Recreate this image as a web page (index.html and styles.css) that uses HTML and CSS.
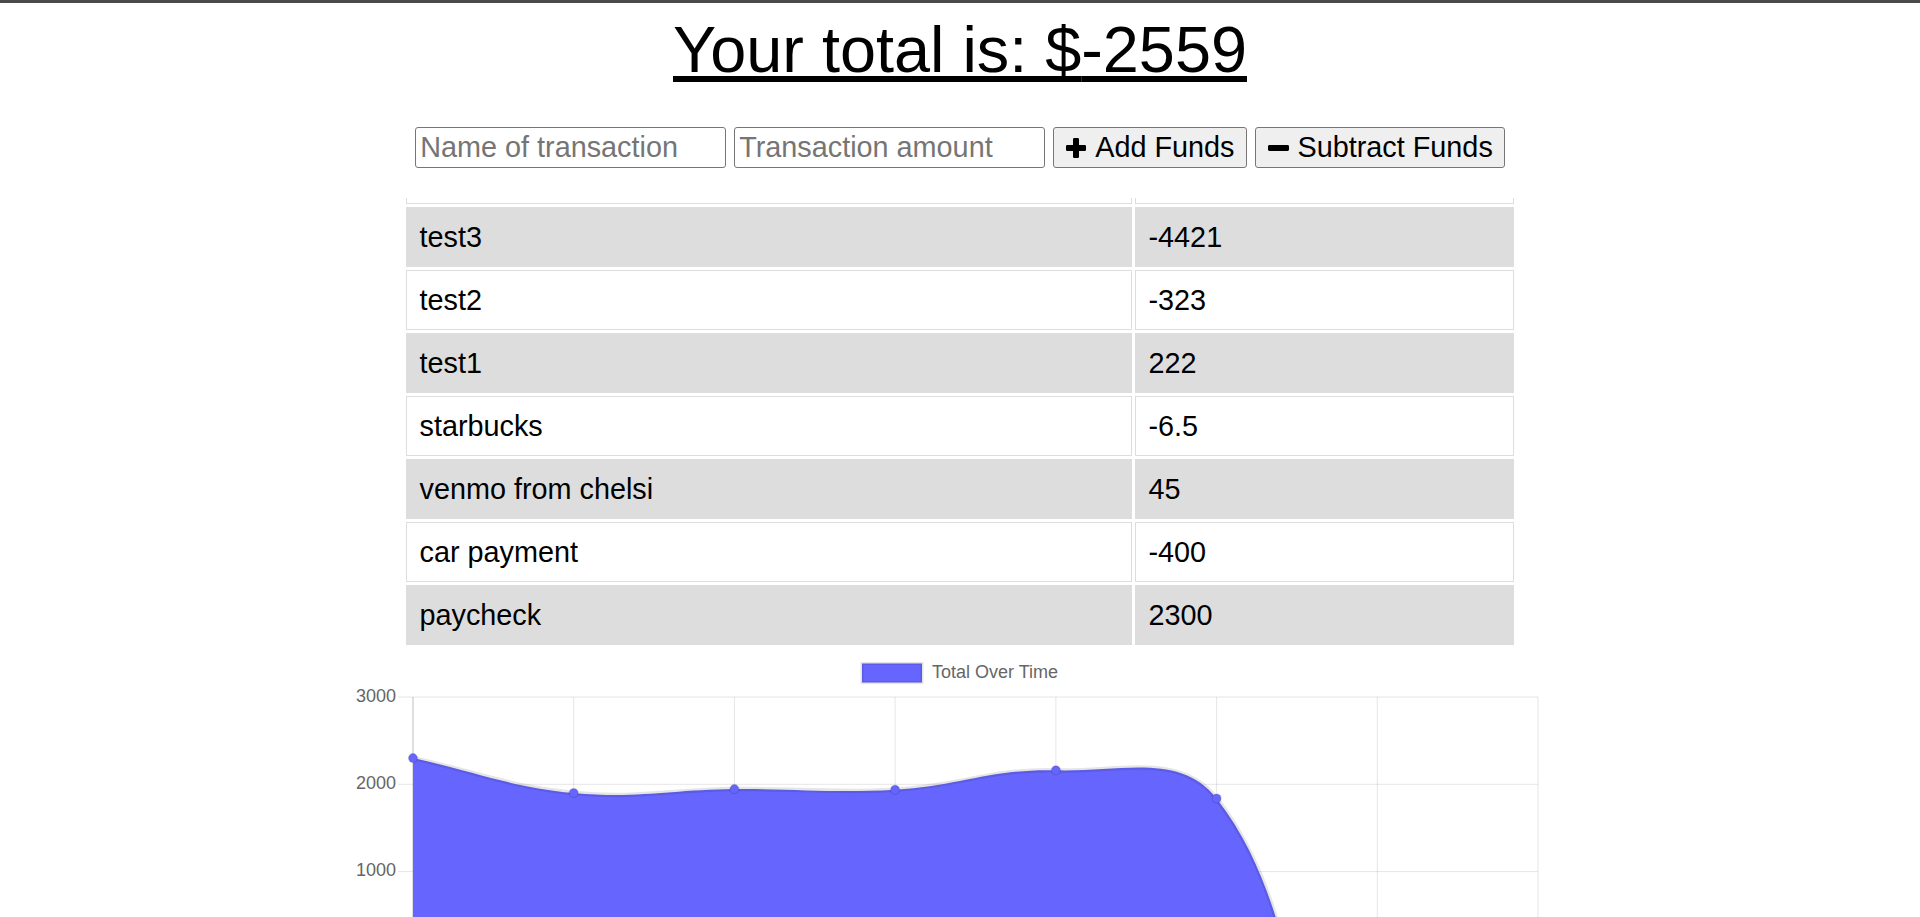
FILE: index.html
```html
<!DOCTYPE html>
<html lang="en">
<head>
  <meta charset="UTF-8">
  <meta name="viewport" content="width=device-width, initial-scale=1">
  <title>Budget Tracker</title>
  <link rel="stylesheet" href="styles.css">
</head>
<body>
  <div class="wrapper">
    <div class="total">Your total is: $<span id="total">-2559</span></div>

    <div class="form">
      <input type="text" id="t-name" placeholder="Name of transaction">
      <input type="number" id="t-amount" placeholder="Transaction amount">
      <button id="add-btn">
        <svg class="icon" width="20" height="20" viewBox="0 0 20 20"><rect x="7" y="0" width="6" height="20" rx="1.2"/><rect x="0" y="7" width="20" height="6" rx="1.2"/></svg>
        Add Funds
      </button>
      <button id="sub-btn">
        <svg class="icon" width="21" height="20" viewBox="0 0 21 20"><rect x="0" y="7" width="21" height="6" rx="1.4"/></svg>
        Subtract Funds
      </button>
    </div>

    <div class="transactions">
      <table>
        <thead>
          <tr>
            <th class="name">Transaction</th>
            <th>Amount</th>
          </tr>
        </thead>
        <tbody id="tbody">
          <tr><td>test4</td><td>24.5</td></tr>
          <tr><td>test3</td><td>-4421</td></tr>
          <tr><td>test2</td><td>-323</td></tr>
          <tr><td>test1</td><td>222</td></tr>
          <tr><td>starbucks</td><td>-6.5</td></tr>
          <tr><td>venmo from chelsi</td><td>45</td></tr>
          <tr><td>car payment</td><td>-400</td></tr>
          <tr><td>paycheck</td><td>2300</td></tr>
        </tbody>
      </table>
    </div>

    <svg class="chart" width="1238" height="269" viewBox="341 646 1238 269">
      <!-- legend -->
      <rect class="legend-box" x="862" y="661.5" width="60" height="19"/>
      <text class="label" x="932" y="671" dominant-baseline="middle">Total Over Time</text>

      <!-- y grid -->
      <g class="grid">
        <line x1="398" y1="695" x2="1538" y2="695"/>
        <line x1="398" y1="782.3" x2="1538" y2="782.3"/>
        <line x1="398" y1="869.6" x2="1538" y2="869.6"/>
        <line x1="573.7" y1="695" x2="573.7" y2="1234"/>
        <line x1="734.4" y1="695" x2="734.4" y2="1234"/>
        <line x1="895.1" y1="695" x2="895.1" y2="1234"/>
        <line x1="1055.9" y1="695" x2="1055.9" y2="1234"/>
        <line x1="1216.6" y1="695" x2="1216.6" y2="1234"/>
        <line x1="1377.3" y1="695" x2="1377.3" y2="1234"/>
        <line x1="1538" y1="695" x2="1538" y2="1234"/>
      </g>
      <line class="zero" x1="413" y1="695" x2="413" y2="1234"/>

      <text class="label" x="396" y="695" text-anchor="end" dominant-baseline="middle">3000</text>
      <text class="label" x="396" y="782.3" text-anchor="end" dominant-baseline="middle">2000</text>
      <text class="label" x="396" y="869.6" text-anchor="end" dominant-baseline="middle">1000</text>

      <!-- data -->
      <path class="area" d="M413,956.9 L413,756.1 C477.3,770.1 508.7,784.7 573.7,791 C637.3,797.1 670.1,787.8 734.4,787.1 C798.7,786.4 831.1,791.4 895.1,787.7 C959.7,783.9 991.8,766.5 1055.9,768.3 C1120.4,770.1 1180.5,750 1216.6,796.5 C1309.1,915.6 1284.4,1071.5 1377.3,1182.4 C1413,1219 1473.7,1181.1 1538,1180.3 L1538,956.9 Z"/>
      <path class="line" d="M413,756.1 C477.3,770.1 508.7,784.7 573.7,791 C637.3,797.1 670.1,787.8 734.4,787.1 C798.7,786.4 831.1,791.4 895.1,787.7 C959.7,783.9 991.8,766.5 1055.9,768.3 C1120.4,770.1 1180.5,750 1216.6,796.5 C1309.1,915.6 1284.4,1071.5 1377.3,1182.4 C1413,1219 1473.7,1181.1 1538,1180.3"/>
      <g class="points">
        <circle cx="413" cy="756.1" r="4.5"/>
        <circle cx="573.7" cy="791" r="4.5"/>
        <circle cx="734.4" cy="787.1" r="4.5"/>
        <circle cx="895.1" cy="787.7" r="4.5"/>
        <circle cx="1055.9" cy="768.3" r="4.5"/>
        <circle cx="1216.6" cy="796.5" r="4.5"/>
      </g>
    </svg>
  </div>
</body>
</html>
```

FILE: styles.css
```css
html {
  border-top: 3px solid #4a4a4a;
  overflow: hidden;
}

body {
  margin: 9px 0 0;
  font-family: "Liberation Sans", Arial, sans-serif;
  font-size: 28.8px;
}

button, input {
  font-size: 100%;
  font-family: "Liberation Sans", Arial, sans-serif;
}

.wrapper {
  margin: 0 auto;
  max-width: 1238px;
  text-align: center;
}

.total {
  font-size: 64.8px;
  text-decoration: underline;
}

.form {
  margin-top: 40px;
  display: flex;
  justify-content: center;
  gap: 8px;
  height: 41px;
}

.form input {
  box-sizing: border-box;
  width: 311px;
  height: 41px;
  padding: 1px 4px;
  border: 1px solid #767676;
  border-radius: 3px;
  color: #000;
}

.form input::placeholder {
  color: #757575;
}

.form button {
  display: flex;
  align-items: center;
  gap: 9px;
  height: 41px;
  padding: 0 11px 0 12px;
  background: #efefef;
  border: 1px solid #767676;
  border-radius: 3px;
  color: #000;
}

.icon {
  display: block;
  fill: #000;
}

.transactions {
  margin: 30px auto 0;
  width: 1114px;
  height: 450px;
  overflow: hidden;
  display: flex;
  flex-direction: column;
  justify-content: flex-end;
  text-align: left;
}

table {
  width: 100%;
  table-layout: fixed;
  border-spacing: 3px;
  flex-shrink: 0;
}

th, td {
  box-sizing: border-box;
  padding: 12.5px 12.5px;
  border: 1px solid #dddddd;
  font-weight: normal;
  text-align: left;
}

th {
  background: #c8c8c8;
}

th.name {
  width: 726px;
}

tbody tr:nth-child(even) {
  background-color: #dddddd;
}

.chart {
  display: block;
  margin: 0 auto;
}

.chart .label {
  font-family: "Liberation Sans", Arial, sans-serif;
  font-size: 18px;
  fill: #666;
}

.legend-box {
  fill: #6666ff;
  stroke: rgba(0, 0, 0, 0.1);
  stroke-width: 3;
}

.grid line {
  stroke: rgba(0, 0, 0, 0.1);
  stroke-width: 1;
}

.zero {
  stroke: rgba(0, 0, 0, 0.25);
  stroke-width: 1;
}

.area {
  fill: #6666ff;
}

.line {
  fill: none;
  stroke: rgba(0, 0, 0, 0.1);
  stroke-width: 4.5;
}

.points circle {
  fill: #6666ff;
  stroke: rgba(0, 0, 0, 0.1);
  stroke-width: 1.5;
}
```
